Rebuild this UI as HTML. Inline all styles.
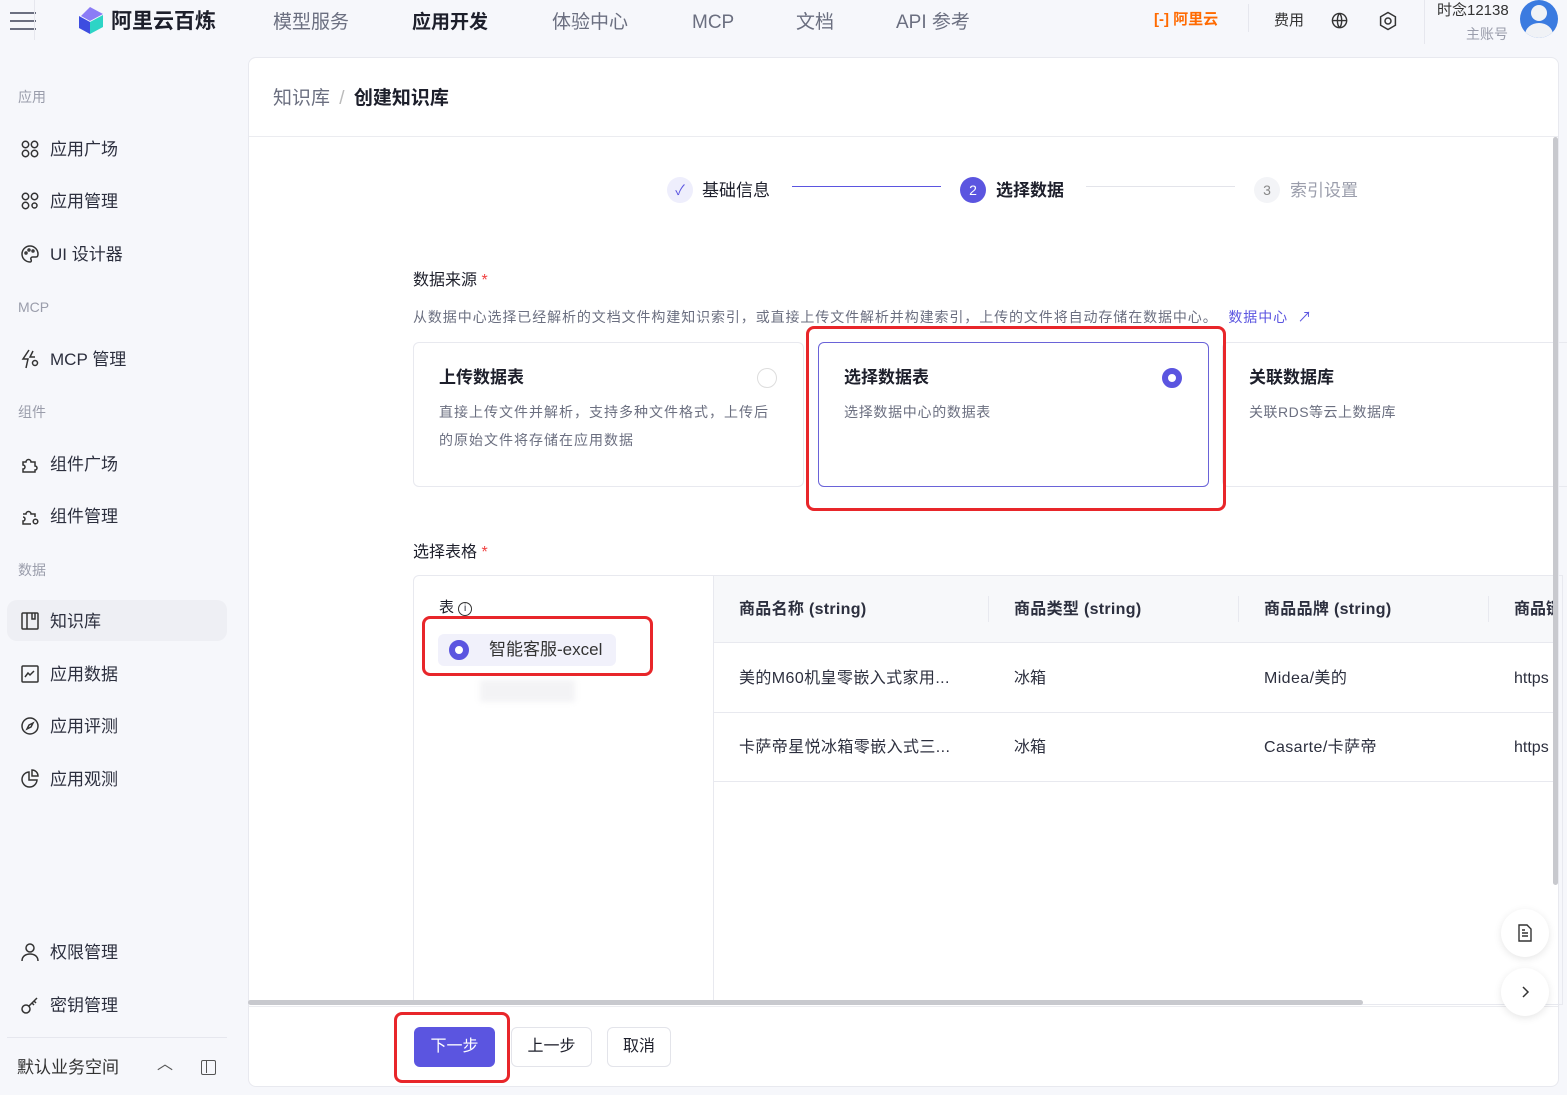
<!DOCTYPE html>
<html><head><meta charset="utf-8">
<style>
*{box-sizing:border-box;margin:0;padding:0}
body{width:1567px;height:1095px;background:#f6f7fb;font-family:"Liberation Sans","Noto Sans CJK SC",sans-serif;color:#262938;position:relative;overflow:hidden}
.a{position:absolute;white-space:nowrap;line-height:1.35}
.t{margin-top:2px}
.nav{font-size:19px;color:#6b6f80;top:10px}
.side{font-size:17px;color:#2c2f3e;left:50px;margin-top:2px}
.sec{font-size:14px;color:#9a9dab;left:18px;margin-top:1px}
.ic{position:absolute;left:20px;width:20px;height:20px}
.th{font-size:16px;font-weight:bold;color:#2c2f3e;margin-top:2px}
.td{font-size:16px;color:#2c2f3e;margin-top:2px}
</style></head><body>
<div class="a" style="left:10px;top:12px;width:26px;height:20px">
 <div style="height:2px;background:#6b6f80;margin-bottom:6px"></div><div style="height:2px;background:#6b6f80;margin-bottom:6px"></div><div style="height:2px;background:#6b6f80"></div></div>
<div class="a" style="left:34px;top:0;width:1px;height:40px;background:#e6e7ee"></div>
<svg class="a" style="left:76px;top:6px" width="30" height="30" viewBox="0 0 30 30"><path d="M14 1 L27 8 L14 15 L5 10Z" fill="#8b7cf6"/><path d="M3 10 L14 16 L14 28 L3 22Z" fill="#3d4de0"/><path d="M14 16 L27 9 L27 21 L14 28Z" fill="#2dd4c6"/></svg>
<div class="a" style="left:111px;top:8px;font-size:21px;font-weight:bold;color:#1d1f2b">阿里云百炼</div>
<div class="a nav" style="left:273px">模型服务</div>
<div class="a nav" style="left:412px;color:#1d1f2b;font-weight:bold">应用开发</div>
<div class="a nav" style="left:552px">体验中心</div>
<div class="a nav" style="left:692px">MCP</div>
<div class="a nav" style="left:796px">文档</div>
<div class="a nav" style="left:896px">API 参考</div>
<div class="a" style="left:1154px;top:10px;font-size:15px;color:#ff6a00;font-weight:bold">[-] 阿里云</div>
<div class="a" style="left:1248px;top:4px;width:1px;height:28px;background:#e6e7ee"></div>
<div class="a" style="left:1274px;top:11px;font-size:15px;color:#333">费用</div>
<svg class="a" style="left:1331px;top:12px" width="19" height="19" viewBox="0 0 20 20" fill="none" stroke="#333" stroke-width="1.5"><circle cx="9" cy="9" r="7.5"/><path d="M1.5 9h15M9 1.5c-3 3-3 12 0 15M9 1.5c3 3 3 12 0 15"/></svg>
<svg class="a" style="left:1378px;top:11px" width="20" height="20" viewBox="0 0 20 20" fill="none" stroke="#333" stroke-width="1.5"><path d="M10 1.5l7.4 4.25v8.5L10 18.5l-7.4-4.25v-8.5z"/><circle cx="10" cy="10" r="3"/></svg>
<div class="a" style="left:1424px;top:0;width:1px;height:44px;background:#e6e7ee"></div>
<div class="a" style="left:1437px;top:1px;font-size:15px;color:#333">时念12138</div>
<div class="a" style="left:1466px;top:25px;font-size:14px;color:#9a9dab">主账号</div>
<div class="a" style="left:1520px;top:0;width:38px;height:38px;border-radius:50%;background:#3b7be0;overflow:hidden"><div style="position:absolute;left:11px;top:5px;width:16px;height:16px;border-radius:50%;background:#f0f2f6"></div><div style="position:absolute;left:5px;top:23px;width:28px;height:24px;border-radius:50%;background:#f0f2f6"></div></div>
<div class="a sec" style="top:87px">应用</div>
<svg class="ic" style="top:139px" viewBox="0 0 20 20" fill="none" stroke="#333" stroke-width="1.5"><circle cx="5.5" cy="5.5" r="3.2"/><circle cx="14.5" cy="5.5" r="3.2"/><circle cx="5.5" cy="14.5" r="3.2"/><circle cx="14.5" cy="14.5" r="3.2"/></svg>
<div class="a side" style="top:137px">应用广场</div>
<svg class="ic" style="top:191px" viewBox="0 0 20 20" fill="none" stroke="#333" stroke-width="1.5"><circle cx="5.5" cy="5.5" r="3.2"/><circle cx="14.5" cy="5.5" r="3.2"/><circle cx="5.5" cy="14.5" r="3.2"/><circle cx="14.5" cy="14.5" r="2.5"/></svg>
<div class="a side" style="top:189px">应用管理</div>
<svg class="ic" style="top:244px" viewBox="0 0 20 20" fill="none" stroke="#333" stroke-width="1.5"><path d="M10 2a8 8 0 100 16c1.5 0 1.5-1.5 1-2.5s0-2.5 1.5-2.5H16c1.5 0 2-1 2-3A8 8 0 0010 2z"/><circle cx="6" cy="9" r="1"/><circle cx="9" cy="6" r="1"/><circle cx="13" cy="7" r="1"/></svg>
<div class="a side" style="top:242px">UI 设计器</div>
<div class="a sec" style="top:297px">MCP</div>
<svg class="ic" style="top:349px" viewBox="0 0 20 20" fill="none" stroke="#333" stroke-width="1.5"><path d="M9 1L3 10h5l-2 9M13 2l-3 6h5"/><circle cx="15" cy="14" r="2.5"/></svg>
<div class="a side" style="top:347px">MCP 管理</div>
<div class="a sec" style="top:402px">组件</div>
<svg class="ic" style="top:454px" viewBox="0 0 20 20" fill="none" stroke="#333" stroke-width="1.5"><path d="M3 8h3a2.5 2.5 0 115 0h4v4a2 2 0 010 4v2H3v-3a2 2 0 000-4z"/></svg>
<div class="a side" style="top:452px">组件广场</div>
<svg class="ic" style="top:506px" viewBox="0 0 20 20" fill="none" stroke="#333" stroke-width="1.5"><path d="M3 8h3a2.5 2.5 0 115 0h4v3M11 18H3v-3a2 2 0 000-4"/><circle cx="15.5" cy="15.5" r="2.3"/></svg>
<div class="a side" style="top:504px">组件管理</div>
<div class="a sec" style="top:560px">数据</div>
<div class="a" style="left:7px;top:600px;width:220px;height:41px;border-radius:10px;background:#eeeff4"></div>
<svg class="ic" style="top:611px" viewBox="0 0 20 20" fill="none" stroke="#333" stroke-width="1.5"><rect x="2" y="2" width="16" height="16" rx="1"/><path d="M7 2v16M12 2v6h3V2"/></svg>
<div class="a side" style="top:609px">知识库</div>
<svg class="ic" style="top:664px" viewBox="0 0 20 20" fill="none" stroke="#333" stroke-width="1.5"><rect x="2" y="2" width="16" height="16" rx="1"/><path d="M5 13l3-4 2 2 4-4"/></svg>
<div class="a side" style="top:662px">应用数据</div>
<svg class="ic" style="top:716px" viewBox="0 0 20 20" fill="none" stroke="#333" stroke-width="1.5"><circle cx="10" cy="10" r="8"/><path d="M13 7l-4 2-2 4 4-2z"/></svg>
<div class="a side" style="top:714px">应用评测</div>
<svg class="ic" style="top:769px" viewBox="0 0 20 20" fill="none" stroke="#333" stroke-width="1.5"><path d="M9 3a7.5 7.5 0 108 8H9z"/><path d="M12 1v6h6a6 6 0 00-6-6z"/></svg>
<div class="a side" style="top:767px">应用观测</div>
<svg class="ic" style="top:942px" viewBox="0 0 20 20" fill="none" stroke="#333" stroke-width="1.5"><circle cx="10" cy="6" r="4"/><path d="M2 19c0-5 4-7 8-7s8 2 8 7"/></svg>
<div class="a side" style="top:940px">权限管理</div>
<svg class="ic" style="top:995px" viewBox="0 0 20 20" fill="none" stroke="#333" stroke-width="1.5"><circle cx="6" cy="14" r="4"/><path d="M9 11l8-8M14 6l2 2M12 8l2 2"/></svg>
<div class="a side" style="top:993px">密钥管理</div>
<div class="a" style="left:7px;top:1037px;width:220px;height:1px;background:#e6e7ee"></div>
<div class="a" style="left:17px;top:1057px;font-size:17px;color:#333">默认业务空间</div>
<div class="a" style="left:157px;top:1054px;font-size:16px;color:#555">︿</div>
<div class="a" style="left:201px;top:1060px;width:15px;height:15px;border:1.5px solid #555;border-radius:2px"><div style="position:absolute;left:4px;top:0;width:1px;height:12px;background:#555"></div></div>
<div class="a" style="left:248px;top:57px;width:1311px;height:1030px;background:#fff;border:1px solid #e8e9ef;border-radius:8px"></div>
<div class="a" style="left:273px;top:86px;font-size:19px;color:#6b6f80">知识库 <span style="color:#bbb;margin:0 4px">/</span> <span style="color:#1d1f2b;font-weight:bold">创建知识库</span></div>
<div class="a" style="left:249px;top:136px;width:1309px;height:1px;background:#ebecf0"></div>
<div class="a" style="left:667px;top:177px;width:26px;height:26px;border-radius:50%;background:#eeeefc;color:#5b55e0;font-size:14px;text-align:center;line-height:26px">✓</div>
<div class="a" style="left:702px;top:180px;font-size:17px;color:#1d1f2b">基础信息</div>
<div class="a" style="left:792px;top:186px;width:149px;height:1px;background:#5b55e0"></div>
<div class="a" style="left:960px;top:177px;width:26px;height:26px;border-radius:50%;background:#5b55e0;color:#fff;font-size:14px;text-align:center;line-height:26px">2</div>
<div class="a" style="left:996px;top:180px;font-size:17px;color:#1d1f2b;font-weight:bold">选择数据</div>
<div class="a" style="left:1086px;top:186px;width:149px;height:1px;background:#e3e4ea"></div>
<div class="a" style="left:1254px;top:177px;width:26px;height:26px;border-radius:50%;background:#f3f4f7;color:#888;font-size:14px;text-align:center;line-height:26px">3</div>
<div class="a" style="left:1290px;top:180px;font-size:17px;color:#9a9dab">索引设置</div>
<div class="a" style="left:413px;top:270px;font-size:16px;color:#1d1f2b">数据来源 <span style="color:#f04040">*</span></div>
<div class="a" style="left:413px;top:308px;font-size:14px;color:#6b6f80;letter-spacing:0.9px">从数据中心选择已经解析的文档文件构建知识索引，或直接上传文件解析并构建索引，上传的文件将自动存储在数据中心。 <span style="color:#5b55e0;margin-left:6px">数据中心 &nbsp;↗</span></div>
<div class="a" style="left:413px;top:342px;width:391px;height:145px;border:1px solid #e8e9ef;border-radius:6px"></div>
<div class="a" style="left:439px;top:367px;font-size:17px;font-weight:bold;color:#1d1f2b">上传数据表</div>
<div class="a" style="left:757px;top:368px;width:20px;height:20px;border-radius:50%;border:1px solid #ddd"></div>
<div class="a" style="left:439px;top:398px;font-size:14px;color:#6b6f80;line-height:28px;letter-spacing:1px">直接上传文件并解析，支持多种文件格式，上传后<br>的原始文件将存储在应用数据</div>
<div class="a" style="left:818px;top:342px;width:391px;height:145px;border:1px solid #6a63d8;border-radius:6px"></div>
<div class="a" style="left:844px;top:367px;font-size:17px;font-weight:bold;color:#1d1f2b">选择数据表</div>
<div class="a" style="left:1162px;top:368px;width:20px;height:20px;border-radius:50%;border:6px solid #5b55e0;background:#fff"></div>
<div class="a" style="left:844px;top:403px;font-size:14px;color:#6b6f80;letter-spacing:0.7px">选择数据中心的数据表</div>
<div class="a" style="left:1222px;top:342px;width:400px;height:145px;border:1px solid #e8e9ef;border-radius:6px"></div>
<div class="a" style="left:1249px;top:367px;font-size:17px;font-weight:bold;color:#1d1f2b">关联数据库</div>
<div class="a" style="left:1249px;top:403px;font-size:14px;color:#6b6f80;letter-spacing:0.5px">关联RDS等云上数据库</div>
<div class="a" style="left:806px;top:326px;width:420px;height:185px;border:3px solid #e8262a;border-radius:8px"></div>
<div class="a" style="left:413px;top:542px;font-size:16px;color:#1d1f2b">选择表格 <span style="color:#f04040">*</span></div>
<div class="a" style="left:413px;top:575px;width:1150px;height:430px;border:1px solid #e8e9ef;border-radius:6px 0 0 0"></div>
<div class="a" style="left:713px;top:575px;width:1px;height:430px;background:#e8e9ef"></div>
<div class="a" style="left:714px;top:576px;width:842px;height:67px;background:#f7f8fa;border-bottom:1px solid #e8e9ef"></div>
<div class="a" style="left:439px;top:598px;font-size:15px;color:#1d1f2b">表 <span style="display:inline-block;width:14px;height:14px;border:1px solid #333;border-radius:50%;font-size:10px;text-align:center;line-height:12px;vertical-align:1px">i</span></div>
<div class="a" style="left:438px;top:634px;width:178px;height:32px;border-radius:6px;background:#f1f1fb"></div>
<div class="a" style="left:449px;top:640px;width:20px;height:20px;border-radius:50%;border:6px solid #5b55e0;background:#fff"></div>
<div class="a" style="left:489px;top:639px;font-size:17px;color:#333">智能客服-excel</div>
<div class="a" style="left:480px;top:680px;width:95px;height:22px;background:#f3f3f5;filter:blur(3px)"></div>
<div class="a" style="left:422px;top:616px;width:231px;height:60px;border:3px solid #e8262a;border-radius:8px"></div>
<div class="a th" style="left:739px;top:597px;letter-spacing:0.3px">商品名称 (string)</div>
<div class="a" style="left:988px;top:596px;width:1px;height:26px;background:#e8e9ef"></div>
<div class="a th" style="left:1014px;top:597px;letter-spacing:0.3px">商品类型 (string)</div>
<div class="a" style="left:1238px;top:596px;width:1px;height:26px;background:#e8e9ef"></div>
<div class="a th" style="left:1264px;top:597px;letter-spacing:0.3px">商品品牌 (string)</div>
<div class="a" style="left:1488px;top:596px;width:1px;height:26px;background:#e8e9ef"></div>
<div class="a th" style="left:1514px;top:597px;width:40px;overflow:hidden">商品链接</div>
<div class="a td" style="left:739px;top:666px;letter-spacing:0.4px">美的M60机皇零嵌入式家用...</div>
<div class="a td" style="left:1014px;top:666px">冰箱</div>
<div class="a td" style="left:1264px;top:666px;letter-spacing:0.4px">Midea/美的</div>
<div class="a td" style="left:1514px;top:666px;width:40px;height:24px;overflow:hidden">https</div>
<div class="a" style="left:714px;top:712px;width:842px;height:1px;background:#e8e9ef"></div>
<div class="a td" style="left:739px;top:735px;letter-spacing:0.4px">卡萨帝星悦冰箱零嵌入式三...</div>
<div class="a td" style="left:1014px;top:735px">冰箱</div>
<div class="a td" style="left:1264px;top:735px;letter-spacing:0.4px">Casarte/卡萨帝</div>
<div class="a td" style="left:1514px;top:735px;width:40px;height:24px;overflow:hidden">https</div>
<div class="a" style="left:714px;top:781px;width:842px;height:1px;background:#e8e9ef"></div>
<div class="a" style="left:1553px;top:137px;width:5px;height:748px;background:#c8c9ce;border-radius:3px"></div>
<div class="a" style="left:248px;top:1000px;width:1115px;height:5px;background:#c8c9ce;border-radius:3px"></div>
<div class="a" style="left:249px;top:1006px;width:1309px;height:1px;background:#ebecf0"></div>
<div class="a" style="left:1501px;top:909px;width:48px;height:48px;border-radius:50%;background:#fff;box-shadow:0 2px 8px rgba(0,0,0,.1)"><svg style="position:absolute;left:17px;top:15px" width="14" height="18" viewBox="0 0 14 18" fill="none" stroke="#333" stroke-width="1.4"><path d="M1 1h8l4 4v12H1z"/><path d="M4 9h6M4 12h6M4 6h3"/></svg></div>
<div class="a" style="left:1501px;top:968px;width:48px;height:48px;border-radius:50%;background:#fff;box-shadow:0 2px 8px rgba(0,0,0,.1)"><svg style="position:absolute;left:19px;top:17px" width="10" height="14" viewBox="0 0 10 14" fill="none" stroke="#333" stroke-width="1.5"><path d="M3 2l5 5-5 5"/></svg></div>
<div class="a" style="left:414px;top:1027px;width:81px;height:40px;border-radius:6px;background:#5b55e0;color:#fff;font-size:16px;text-align:center;line-height:40px">下一步</div>
<div class="a" style="left:394px;top:1012px;width:116px;height:71px;border:3px solid #e8262a;border-radius:8px"></div>
<div class="a" style="left:511px;top:1027px;width:81px;height:40px;border-radius:6px;border:1px solid #e3e4ea;background:#fff;font-size:16px;text-align:center;line-height:38px;color:#1d1f2b">上一步</div>
<div class="a" style="left:607px;top:1027px;width:64px;height:40px;border-radius:6px;border:1px solid #e3e4ea;background:#fff;font-size:16px;text-align:center;line-height:38px;color:#1d1f2b">取消</div>
</body></html>
